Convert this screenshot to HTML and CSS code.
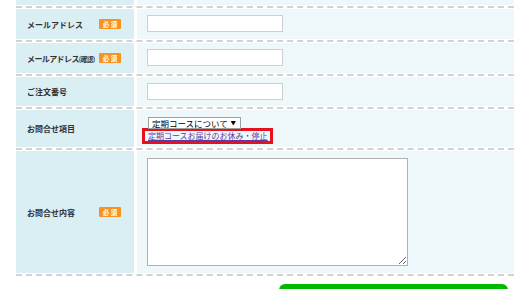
FILE: index.html
```html
<!DOCTYPE html>
<html lang="ja">
<head>
  <meta charset="UTF-8">
  <title>お問合せ</title>
  <meta name="viewport" content="width=device-width, initial-scale=1">
  <link rel="stylesheet" href="styles.css">
</head>
<body>
  <div class="form">
    <!-- 前の行（上に隠れる） -->
    <div class="row row-prev">
      <div class="label"></div>
      <div class="value"></div>
    </div>

    <div class="row">
      <div class="label"><span>メールアドレス</span><em class="req">必 須</em></div>
      <div class="value"><input type="text" class="input-box"></div>
    </div>

    <div class="row">
      <div class="label"><span class="tight">メールアドレス<small>(確認)</small></span><em class="req">必 須</em></div>
      <div class="value"><input type="text" class="input-box"></div>
    </div>

    <div class="row row-short">
      <div class="label"><span>ご注文番号</span></div>
      <div class="value"><input type="text" class="input-box"></div>
    </div>

    <div class="row row-select">
      <div class="label"><span>お問合せ項目</span></div>
      <div class="value value-top">
        <span class="select-wrap">
          <select class="select">
            <option>定期コースについて</option>
          </select>
        </span>
        <a href="#" class="mark-link">定期コースお届けのお休み・停止</a>
      </div>
    </div>

    <div class="row row-text">
      <div class="label"><span>お問合せ内容</span><em class="req">必 須</em></div>
      <div class="value value-top"><textarea class="textarea"></textarea></div>
    </div>

    <div class="buttons">
      <button class="btn-next" aria-label="確認画面へ進む"></button>
    </div>
  </div>
</body>
</html>
```

FILE: styles.css
```css
body {
  margin: 0;
  background: #fff;
  font-family: "Noto Sans CJK JP", "Noto Sans", sans-serif;
  color: #333;
}

.form {
  margin: -26px 16px 0;
}

.row {
  display: grid;
  grid-template-columns: 118px 1fr;
  column-gap: 3px;
  height: 30px;
  padding: 1px 0;
  border-bottom: 2px dashed #d2d2d2;
}
.row-short { height: 29px; }
.row-select { height: 37px; }
.row-text { height: 122px; }

.label {
  background: #daeff4;
  display: flex;
  align-items: center;
  justify-content: space-between;
  padding: 0 13px 0 11px;
  font-size: 8px;
  font-weight: bold;
  color: #333;
  white-space: nowrap;
}
.label .tight {
  letter-spacing: -0.6px;
}
.label small {
  font-size: 6.5px;
  letter-spacing: -0.5px;
}

.req {
  font-style: normal;
  font-weight: bold;
  background: #f7931e;
  color: #fff;
  font-size: 6.5px;
  line-height: 10px;
  width: 22px;
  flex: none;
  text-align: center;
  border-radius: 1px;
}

.value {
  background: #eef8fa;
  display: flex;
  align-items: center;
  padding-left: 10px;
  font-size: 9px;
  line-height: 10px;
}
.value-top {
  flex-direction: column;
  align-items: flex-start;
  padding-top: 7px;
}

.input-box {
  box-sizing: border-box;
  width: 136px;
  height: 17px;
  margin: 0 0 1px;
  border: 1px solid #cfcfcf;
  background: #fff;
}

.select-wrap {
  position: relative;
  display: block;
  height: 12px;
  margin-left: 1px;
}
.select-wrap::after {
  content: "▼";
  position: absolute;
  right: 5px;
  top: 1px;
  font-size: 5.5px;
  line-height: 10px;
  color: #000;
  pointer-events: none;
}
.select {
  display: block;
  appearance: none;
  box-sizing: border-box;
  width: 93px;
  height: 12px;
  margin: 0;
  padding: 0 0 0 3px;
  border: 1px solid #a0a0a0;
  border-radius: 0;
  background: #fff;
  font-family: inherit;
  font-size: 8.5px;
  line-height: 10px;
  color: #000;
}

.mark-link {
  display: block;
  margin: -1px 0 0 -5px;
  padding: 0 2px 0 3px;
  border: 3px solid #e8101c;
  font-size: 8px;
  line-height: 10px;
  color: #5a3aa6;
  text-decoration: underline;
  white-space: nowrap;
}

.textarea {
  display: block;
  box-sizing: border-box;
  width: 261px;
  height: 108px;
  margin: 0;
  border: 1px solid #b0b0b0;
  background: #fff;
}

.buttons {
  display: flex;
  justify-content: flex-end;
  padding: 8px 6px 0 0;
}
.btn-next {
  width: 229px;
  height: 40px;
  border: none;
  border-radius: 6px;
  background: #00b900;
}
```
